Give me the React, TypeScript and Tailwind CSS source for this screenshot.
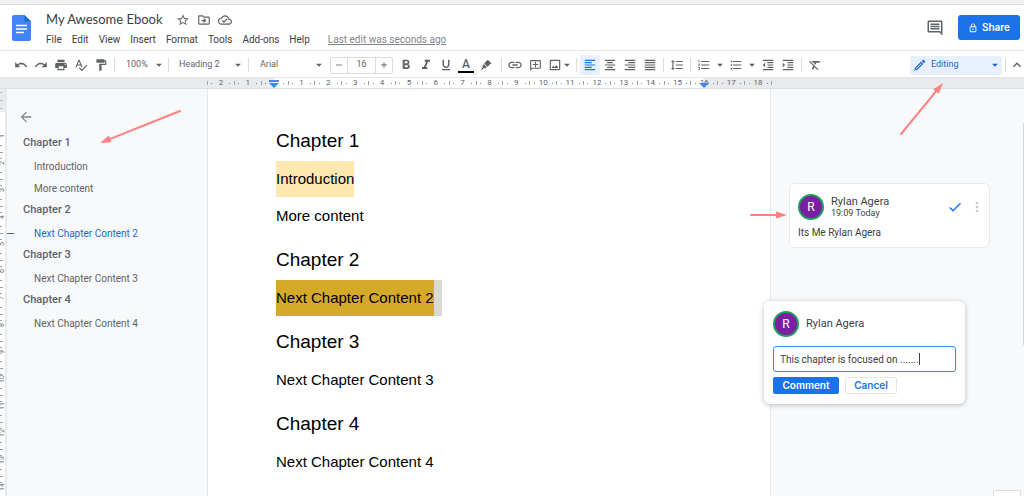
import { ReactNode, useState } from 'react';
import {
  MdAdd,
  MdArrowBack,
  MdArrowDropDown,
  MdCheck,
  MdFormatAlignCenter,
  MdFormatAlignJustify,
  MdFormatAlignLeft,
  MdFormatAlignRight,
  MdFormatBold,
  MdFormatClear,
  MdFormatIndentDecrease,
  MdFormatIndentIncrease,
  MdFormatItalic,
  MdFormatLineSpacing,
  MdFormatListBulleted,
  MdFormatListNumbered,
  MdFormatPaint,
  MdFormatUnderlined,
  MdKeyboardArrowUp,
  MdLink,
  MdMoreVert,
  MdOutlineAddComment,
  MdOutlineCloudDone,
  MdOutlineDriveFileMove,
  MdOutlineEdit,
  MdOutlineImage,
  MdOutlineInsertComment,
  MdOutlineLock,
  MdPrint,
  MdRedo,
  MdRemove,
  MdSpellcheck,
  MdStarBorder,
  MdUndo,
} from 'react-icons/md';

interface Section {
  title: string;
  items: string[];
}

const SECTIONS: Section[] = [
  { title: 'Chapter 1', items: ['Introduction', 'More content'] },
  { title: 'Chapter 2', items: ['Next Chapter Content 2'] },
  { title: 'Chapter 3', items: ['Next Chapter Content 3'] },
  { title: 'Chapter 4', items: ['Next Chapter Content 4'] },
];

const MENUS = ['File', 'Edit', 'View', 'Insert', 'Format', 'Tools', 'Add-ons', 'Help'];

const RULER_LABELS = ['2', '1', '', ...Array.from({ length: 18 }, (_, i) => String(i + 1))];
const SIDE_LABELS = Array.from({ length: 14 }, (_, i) => String(i + 1));

function ToolButton({ label, active, children }: { label: string; active?: boolean; children: ReactNode }) {
  return (
    <button
      type="button"
      aria-label={label}
      title={label}
      className={`flex h-5 w-5 shrink-0 items-center justify-center rounded-xs ${active ? 'bg-[#e8f0fe] text-[#1a73e8]' : ''}`}
    >
      {children}
    </button>
  );
}

function CaretButton({ label, className = '' }: { label: string; className?: string }) {
  return (
    <button type="button" aria-label={label} className={`flex h-5 w-3 shrink-0 items-center justify-center ${className}`}>
      <MdArrowDropDown className="h-3.5 w-3.5 shrink-0" />
    </button>
  );
}

function Divider({ className = 'mx-[3px]' }: { className?: string }) {
  return <span className={`h-3.5 w-px shrink-0 bg-[#dadce0] ${className}`} />;
}

function Dropdown({ label, value, className }: { label: string; value: string; className: string }) {
  return (
    <div className={`relative flex h-5 shrink-0 items-center ${className}`}>
      <select aria-label={label} className="h-full w-full appearance-none bg-transparent pr-4 text-[9px] outline-none">
        <option>{value}</option>
      </select>
      <MdArrowDropDown className="pointer-events-none absolute right-0 h-3.5 w-3.5" />
    </div>
  );
}

interface ArrowProps {
  width: number;
  height: number;
  from: [number, number];
  to: [number, number];
  className: string;
}

function Arrow({ width, height, from, to, className }: ArrowProps) {
  const angle = Math.atan2(to[1] - from[1], to[0] - from[0]);
  const length = Math.hypot(to[0] - from[0], to[1] - from[1]);
  return (
    <svg width={width} height={height} className={`pointer-events-none absolute z-20 overflow-visible ${className}`} aria-hidden="true">
      <g transform={`translate(${from[0]} ${from[1]}) rotate(${(angle * 180) / Math.PI})`}>
        <path d={`M0 0H${length - 9}`} stroke="#ff8080" strokeWidth="2" strokeLinecap="round" />
        <path d={`M${length} 0l-11 -3.6v7.2z`} fill="#ff8080" />
      </g>
    </svg>
  );
}

function Avatar() {
  return (
    <span className="flex h-[26px] w-[26px] shrink-0 items-center justify-center rounded-full border-2 border-[#1e9e5a] bg-[#7b1fa2] text-[12px] text-white">
      R
    </span>
  );
}

function Header() {
  return (
    <header className="flex h-[46px] shrink-0 items-center border-b border-[#e4e6ea] bg-white pr-1 pl-3">
      <svg viewBox="0 0 19 26" className="h-[26px] w-[19px] shrink-0" aria-hidden="true">
        <path d="M2 0h10.500l6.500 6.500V24a2 2 0 0 1-2 2H2a2 2 0 0 1-2-2V2a2 2 0 0 1 2-2z" fill="#4285f4" />
        <path d="M12.500 0L19 6.500h-6.500z" fill="#1967d2" />
        <path d="M4 10.500h11M4 14h11M4 17.500h8" stroke="#fff" strokeWidth="1.400" />
      </svg>
      <div className="flex flex-1 flex-col pt-[3px] pl-[15px]">
        <div className="flex h-5 items-center text-[#5f6368]">
          <h1 className="font-['Lato',sans-serif] text-[13px] text-[#3c4043]">My Awesome Ebook</h1>
          <button type="button" aria-label="Star" className="ml-[13px]">
            <MdStarBorder className="h-3.5 w-3.5" />
          </button>
          <button type="button" aria-label="Move" className="ml-[7px]">
            <MdOutlineDriveFileMove className="h-3.5 w-3.5" />
          </button>
          <button type="button" aria-label="Document status" className="ml-[7px]">
            <MdOutlineCloudDone className="h-3.5 w-3.5" />
          </button>
        </div>
        <nav className="flex h-[18px] items-center gap-2.5 text-[10px] text-[#3c4043]">
          {MENUS.map((menu) => (
            <button key={menu} type="button">
              {menu}
            </button>
          ))}
          <a href="#history" className="ml-2 text-[#80868b] underline">
            Last edit was seconds ago
          </a>
        </nav>
      </div>
      <button type="button" aria-label="Open comment history" className="mr-3.5 text-[#5f6368]">
        <MdOutlineInsertComment className="h-[18px] w-[18px]" />
      </button>
      <button
        type="button"
        className="flex h-[25px] w-[62px] items-center justify-center gap-1 rounded-[3px] bg-[#1a73e8] font-['Inter',sans-serif] text-[10px] font-semibold text-white"
      >
        <MdOutlineLock className="h-2.5 w-2.5" />
        Share
      </button>
    </header>
  );
}

function Toolbar() {
  return (
    <div className="relative flex h-[27px] shrink-0 items-center border-b border-[#e4e6ea] bg-white pt-0.5 pl-[11px] text-[#5f6368]">
      <ToolButton label="Undo"><MdUndo className="h-3.5 w-3.5" /></ToolButton>
      <ToolButton label="Redo"><MdRedo className="h-3.5 w-3.5" /></ToolButton>
      <ToolButton label="Print"><MdPrint className="h-3.5 w-3.5" /></ToolButton>
      <ToolButton label="Spelling check"><MdSpellcheck className="h-3.5 w-3.5" /></ToolButton>
      <ToolButton label="Paint format"><MdFormatPaint className="h-3.5 w-3.5" /></ToolButton>
      <Divider />
      <Dropdown label="Zoom" value="100%" className="ml-2 w-10" />
      <Divider className="mr-2.5 ml-0.5" />
      <Dropdown label="Styles" value="Heading 2" className="w-[66px]" />
      <Divider className="mr-[11px] ml-[3px]" />
      <Dropdown label="Font" value="Arial" className="w-[66px]" />
      <div className="mr-[3px] ml-1 flex h-[17px] shrink-0 rounded-xs border border-[#dadce0]">
        <button type="button" aria-label="Decrease font size" className="flex w-4 items-center justify-center">
          <MdRemove className="h-2.5 w-2.5" />
        </button>
        <input
          aria-label="Font size"
          defaultValue="16"
          className="w-[29px] border-x border-[#dadce0] text-center text-[9px] outline-none"
        />
        <button type="button" aria-label="Increase font size" className="flex w-4 items-center justify-center">
          <MdAdd className="h-2.5 w-2.5" />
        </button>
      </div>
      <ToolButton label="Bold"><MdFormatBold className="h-4 w-4" /></ToolButton>
      <ToolButton label="Italic"><MdFormatItalic className="h-4 w-4" /></ToolButton>
      <ToolButton label="Underline"><MdFormatUnderlined className="h-3.5 w-3.5" /></ToolButton>
      <ToolButton label="Text color">
        <span className="flex w-4 flex-col items-center border-b-2 border-black text-[12px] leading-[14px] font-medium">A</span>
      </ToolButton>
      <ToolButton label="Highlight color">
        <svg viewBox="0 0 12 12" className="h-3 w-3" aria-hidden="true">
          <path d="M7.800 1.200l3 3L7.400 7.200 4.700 4.500z" fill="currentColor" stroke="currentColor" strokeLinejoin="round" />
          <path d="M3.700 5l3.200 3.200-1.700 1.100H3.600L2.500 10.700H.8l1.900-2.200V6.800z" fill="currentColor" />
        </svg>
      </ToolButton>
      <Divider className="mr-[3px] ml-[5px]" />
      <ToolButton label="Insert link"><MdLink className="h-4 w-4" /></ToolButton>
      <ToolButton label="Add comment"><MdOutlineAddComment className="h-[13px] w-[13px] -scale-x-100" /></ToolButton>
      <ToolButton label="Insert image"><MdOutlineImage className="h-3.5 w-3.5" /></ToolButton>
      <CaretButton label="Image options" className="-ml-1" />
      <Divider />
      <ToolButton label="Left align" active><MdFormatAlignLeft className="h-3.5 w-3.5" /></ToolButton>
      <ToolButton label="Center align"><MdFormatAlignCenter className="h-3.5 w-3.5" /></ToolButton>
      <ToolButton label="Right align"><MdFormatAlignRight className="h-3.5 w-3.5" /></ToolButton>
      <ToolButton label="Justify"><MdFormatAlignJustify className="h-3.5 w-3.5" /></ToolButton>
      <Divider />
      <ToolButton label="Line spacing"><MdFormatLineSpacing className="h-3.5 w-3.5" /></ToolButton>
      <Divider />
      <ToolButton label="Numbered list"><MdFormatListNumbered className="h-3.5 w-3.5" /></ToolButton>
      <CaretButton label="Numbered list options" />
      <ToolButton label="Bulleted list"><MdFormatListBulleted className="h-3.5 w-3.5" /></ToolButton>
      <CaretButton label="Bulleted list options" />
      <ToolButton label="Decrease indent"><MdFormatIndentDecrease className="h-3.5 w-3.5" /></ToolButton>
      <ToolButton label="Increase indent"><MdFormatIndentIncrease className="h-3.5 w-3.5" /></ToolButton>
      <Divider />
      <ToolButton label="Clear formatting"><MdFormatClear className="h-3.5 w-3.5" /></ToolButton>

      <div className="ml-auto flex h-[19px] shrink-0 items-center rounded-xs bg-[#e8f0fe] pl-[3px] text-[#1967d2]">
        <MdOutlineEdit className="h-3.5 w-3.5 shrink-0" />
        <Dropdown label="Mode" value="Editing" className="ml-1 w-[71px]" />
      </div>
      <Divider className="ml-[3px]" />
      <button type="button" aria-label="Hide the menus" className="ml-1 flex h-5 w-[14px] shrink-0 items-center justify-center">
        <MdKeyboardArrowUp className="h-4 w-4 shrink-0" />
      </button>
      <Arrow width={42} height={51} from={[0, 51]} to={[42, 0]} className="top-8 right-[81px]" />
    </div>
  );
}

function Ruler() {
  return (
    <div className="flex h-[11px] shrink-0 border-b border-[#dcdee2] bg-[#e8eaed]">
      <div className="w-[207px] shrink-0" />
      <div className="grid w-[564px] shrink-0 grid-cols-21 text-[#5f6368]">
        {RULER_LABELS.map((label, i) => {
          let shade = '';
          if (i > 2 && i < 18) shade = 'bg-white';
          if (i === 2) shade = 'bg-linear-to-r from-transparent from-50% to-white to-50%';
          if (i === 18) shade = 'bg-linear-to-r from-white from-50% to-transparent to-50%';
          return (
            <div key={i} className={`relative flex items-center justify-between ${shade}`}>
              <span className="h-1 w-px bg-[#9aa0a6]" />
              <span className="h-px w-px bg-[#80868b]" />
              <span className="w-2.5 text-center text-[8px] leading-[10px] whitespace-nowrap">{label}</span>
              <span className="h-px w-px bg-[#80868b]" />
              <span />
              {i === 2 && (
                <svg viewBox="0 0 10 8" className="absolute top-0.5 left-1/2 h-2 w-2.5 -translate-x-1/2" aria-hidden="true">
                  <path d="M0 0h10v2H0zM0 3h10L5 8z" fill="#4285f4" />
                </svg>
              )}
              {i === 18 && (
                <svg viewBox="0 0 10 5" className="absolute bottom-0 left-1/2 h-[5px] w-2.5 -translate-x-1/2" aria-hidden="true">
                  <path d="M0 0h10L5 5z" fill="#4285f4" />
                </svg>
              )}
            </div>
          );
        })}
      </div>
      <span className="my-auto h-1 w-px bg-[#9aa0a6]" />
    </div>
  );
}

function SideRuler() {
  return (
    <div className="w-[7px] shrink-0 overflow-hidden border-r-2 border-[#e8eaed] bg-white text-[#5f6368]">
      <div className="flex h-[23px] flex-col justify-around bg-[#e8eaed]">
        <span className="h-px w-0.5 bg-[#b6babf]" />
        <span className="h-px w-[3px] bg-[#b6babf]" />
        <span className="h-px w-0.5 bg-[#b6babf]" />
      </div>
      <div className="flex flex-col pt-5">
        {SIDE_LABELS.map((label) => (
          <div key={label} className="flex h-[27px] shrink-0 flex-col justify-between">
            <span className="flex h-2 w-[5px] rotate-180 items-center justify-center text-[7px] leading-[5px] [writing-mode:vertical-rl]">
              {label}
            </span>
            <span className="h-px w-0.5 bg-[#9aa0a6]" />
            <span className="h-px w-[3px] bg-[#9aa0a6]" />
            <span className="h-px w-0.5 bg-[#9aa0a6]" />
          </div>
        ))}
      </div>
    </div>
  );
}

function Outline() {
  const [current, setCurrent] = useState('Next Chapter Content 2');

  return (
    <aside className="relative w-[200px] shrink-0 pt-5 text-[10px] text-[#5f6368]">
      <button type="button" aria-label="Close document outline" className="ml-[11px] block text-[#80868b]">
        <MdArrowBack className="h-4 w-4" />
      </button>
      <ul className="pt-[7px]">
        {SECTIONS.map((section) => (
          <li key={section.title}>
            <a href="#outline" className="flex h-[23px] items-center pl-4 text-[11px] font-medium">
              {section.title}
            </a>
            {section.items.map((item) => (
              <a
                key={item}
                href="#outline"
                onClick={() => setCurrent(item)}
                className={`flex h-[22px] items-center ${item === current ? 'text-[#1967d2]' : ''}`}
              >
                <span className={`mr-5 h-px w-[7px] ${item === current ? 'bg-[#1967d2]' : ''}`} />
                {item}
              </a>
            ))}
          </li>
        ))}
      </ul>
      <Arrow width={80} height={32} from={[80, 0]} to={[0, 32]} className="top-[22px] left-[93px]" />
    </aside>
  );
}

function DocumentPage() {
  return (
    <main className="w-[564px] shrink-0 border-x border-[#e4e6e9] bg-white pt-[27px] pl-[68px] font-['Liberation_Sans',Arial,sans-serif] text-black">
      {SECTIONS.map((section) => (
        <section key={section.title}>
          <h2 className="pt-[5px] text-[19px] leading-10">{section.title}</h2>
          {section.items.map((item) => {
            let mark = '';
            if (item === 'Introduction') mark = 'bg-[#fee8b0]';
            if (item === 'Next Chapter Content 2') mark = 'bg-[#d5aa2b]';
            return (
              <p key={item} className="flex pb-px text-[15px] leading-9">
                <span className={mark}>{item}</span>
                {item === 'Next Chapter Content 2' && <span className="w-2 bg-[#d9d9d9]" />}
              </p>
            );
          })}
        </section>
      ))}
    </main>
  );
}

function Comments() {
  const [draft, setDraft] = useState('This chapter is focused on .......');

  return (
    <div className="relative flex-1 pt-[94px] text-[10px] text-[#3c4043]">
      <article className="ml-[18px] w-[201px] rounded-md border border-[#e8eaed] bg-white pt-2.5 pr-1 pb-2 pl-2">
        <div className="flex items-center">
          <Avatar />
          <div className="flex-1 pl-[7px]">
            <p className="text-[11px] leading-3">Rylan Agera</p>
            <p className="text-[9px] leading-[10px]">19:09 Today</p>
          </div>
          <button type="button" aria-label="Mark as resolved" className="text-[#1a73e8]">
            <MdCheck className="h-4 w-4" />
          </button>
          <button type="button" aria-label="More options" className="ml-1.5 text-[#c4c7cb]">
            <MdMoreVert className="h-4 w-4" />
          </button>
        </div>
        <p className="pt-1.5 leading-[13px]">Its Me Rylan Agera</p>
      </article>

      <form
        onSubmit={(e) => e.preventDefault()}
        className="relative z-10 mt-[53px] -ml-[7px] w-[201px] rounded-md bg-white px-[9px] pt-2.5 pb-2.5 shadow-[0_1px_5px_rgba(60,64,67,0.35)]"
      >
        <div className="flex items-center gap-[7px] text-[11px]">
          <Avatar />
          Rylan Agera
        </div>
        <div className="relative mt-[9px]">
          <input
            aria-label="Comment"
            value={draft}
            onChange={(e) => setDraft(e.target.value)}
            className="peer block h-[26px] w-full rounded-[3px] border border-[#4285f4] px-1.5 outline-none"
          />
          {/* resting cursor, gives way to the native one on focus */}
          <span className="absolute top-[7px] left-[146px] h-3 w-px bg-[#3c4043] peer-focus:hidden" />
        </div>
        <div className="mt-[5px] flex gap-1.5 font-['Inter',sans-serif] font-semibold">
          <button type="submit" className="h-[17px] w-[66px] rounded-xs bg-[#1a73e8] text-white">
            Comment
          </button>
          <button type="button" className="h-[17px] w-[52px] rounded-xs border border-[#e4e6ea] text-[#1a73e8]">
            Cancel
          </button>
        </div>
      </form>

      <Arrow width={36} height={2} from={[0, 1]} to={[36, 1]} className="top-[125px] -left-5" />
      <div className="absolute top-[34px] right-0 h-[222px] w-px bg-[#d5d7da]" />
      <button
        type="button"
        aria-label="Explore"
        className="absolute right-[3px] -bottom-5 h-[26px] w-7 rounded-xs border border-[#dadce0] bg-white"
      />
    </div>
  );
}

export default function App() {
  return (
    <div className="flex h-screen flex-col overflow-hidden bg-[#f8f9fa] font-['Roboto',sans-serif]">
      <div className="h-[5px] shrink-0 border-b border-[#d9dadc] bg-[#f1f1f1]" />
      <Header />
      <Toolbar />
      <Ruler />
      <div className="flex min-h-0 flex-1">
        <SideRuler />
        <Outline />
        <DocumentPage />
        <Comments />
      </div>
    </div>
  );
}
